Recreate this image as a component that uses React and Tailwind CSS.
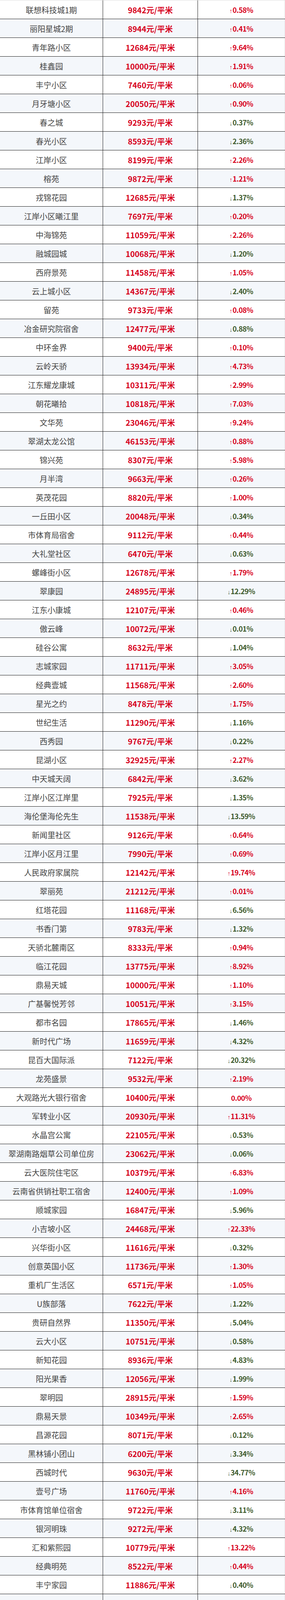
const ROWS = [
  ["联想科技城1期", 9842, "↑0.58%"],
  ["丽阳星城2期", 8944, "↑0.41%"],
  ["青年路小区", 12684, "↑9.64%"],
  ["桂鑫园", 10000, "↑1.91%"],
  ["丰宁小区", 7460, "↑0.06%"],
  ["月牙塘小区", 20050, "↑0.90%"],
  ["春之城", 9293, "↓0.37%"],
  ["春光小区", 8593, "↓2.36%"],
  ["江岸小区", 8199, "↑2.26%"],
  ["榕苑", 9872, "↑1.21%"],
  ["戎锦花园", 12685, "↓1.37%"],
  ["江岸小区曦江里", 7697, "↑0.20%"],
  ["中海锦苑", 11059, "↑2.26%"],
  ["融城园城", 10068, "↓1.20%"],
  ["西府景苑", 11458, "↑1.05%"],
  ["云上城小区", 14367, "↓2.40%"],
  ["留苑", 9733, "↑0.08%"],
  ["冶金研究院宿舍", 12477, "↓0.88%"],
  ["中环金界", 9400, "↑0.10%"],
  ["云岭天骄", 13934, "↑4.73%"],
  ["江东耀龙康城", 10311, "↑2.99%"],
  ["朝花曦拾", 10818, "↑7.03%"],
  ["文华苑", 23046, "↑9.24%"],
  ["翠湖太龙公馆", 46153, "↑0.88%"],
  ["锦兴苑", 8307, "↑5.98%"],
  ["月半湾", 9663, "↑0.26%"],
  ["英茂花园", 8820, "↑1.00%"],
  ["一丘田小区", 20048, "↓0.34%"],
  ["市体育局宿舍", 9112, "↑0.44%"],
  ["大礼堂社区", 6470, "↓0.63%"],
  ["螺峰街小区", 12678, "↑1.79%"],
  ["翠康园", 24895, "↓12.29%"],
  ["江东小康城", 12107, "↑0.46%"],
  ["傲云峰", 10072, "↓0.01%"],
  ["硅谷公寓", 8632, "↓1.04%"],
  ["志城家园", 11711, "↑3.05%"],
  ["经典壹城", 11568, "↑2.60%"],
  ["星光之约", 8478, "↑1.75%"],
  ["世纪生活", 11290, "↓1.16%"],
  ["西秀园", 9767, "↓0.22%"],
  ["昆湖小区", 32925, "↑2.27%"],
  ["中天城天阔", 6842, "↓3.62%"],
  ["江岸小区江岸里", 7925, "↓1.35%"],
  ["海伦堡海伦先生", 11538, "↓13.59%"],
  ["新闻里社区", 9126, "↑0.64%"],
  ["江岸小区月江里", 7990, "↑0.69%"],
  ["人民政府家属院", 12142, "↑19.74%"],
  ["翠丽苑", 21212, "↑0.01%"],
  ["红塔花园", 11168, "↓6.56%"],
  ["书香门第", 9783, "↓1.32%"],
  ["天骄北麓南区", 8333, "↑0.94%"],
  ["临江花园", 13775, "↑8.92%"],
  ["鼎易天城", 10000, "↑1.10%"],
  ["广基馨悦芳邻", 10051, "↑3.15%"],
  ["都市名园", 17865, "↓1.46%"],
  ["新时代广场", 11659, "↓4.32%"],
  ["昆百大国际派", 7122, "↓20.32%"],
  ["龙苑盛景", 9532, "↑2.19%"],
  ["大观路光大银行宿舍", 10400, "0.00%"],
  ["军转业小区", 20930, "↑11.31%"],
  ["水晶宫公寓", 22105, "↓0.53%"],
  ["翠湖南路烟草公司单位房", 23062, "↓0.06%"],
  ["云大医院住宅区", 10379, "↑6.83%"],
  ["云南省供销社职工宿舍", 12400, "↑1.09%"],
  ["顺城家园", 16847, "↓5.96%"],
  ["小吉坡小区", 24468, "↑22.33%"],
  ["兴华街小区", 11616, "↓0.32%"],
  ["创意英国小区", 11736, "↑1.30%"],
  ["重机厂生活区", 6571, "↑1.05%"],
  ["U族部落", 7622, "↓1.22%"],
  ["贵研自然界", 11350, "↓5.04%"],
  ["云大小区", 10751, "↓0.58%"],
  ["新知花园", 8936, "↓4.83%"],
  ["阳光果香", 12056, "↓1.99%"],
  ["翠明园", 28915, "↑1.59%"],
  ["鼎易天景", 10349, "↑2.65%"],
  ["昌源花园", 8071, "↓0.12%"],
  ["黑林铺小团山", 6200, "↓3.34%"],
  ["西城时代", 9630, "↓34.77%"],
  ["壹号广场", 11760, "↑4.16%"],
  ["市体育馆单位宿舍", 9722, "↓3.11%"],
  ["银河明珠", 9272, "↓4.32%"],
  ["汇和紫熙园", 10779, "↑13.22%"],
  ["经典明苑", 8522, "↑0.44%"],
  ["丰宁家园", 11886, "↓0.40%"],
  ["师大附中职工宿舍", 16250, "↑0.78%"],
  ["文林街93号院", 14365, "↓4.62%"],
  ["五华区佳华里", 11477, "↓2.93%"],
  ["和城国际", 6493, "0.00%"],
  ["中天城", 11392, "↑4.26%"],
  ["银河中央", 9537, "↓14.49%"],
  ["云南省水利厅宿舍", 13388, "↑13.57%"],
  ["桂华园", 14450, "↓3.95%"],
  ["春晖小区一期", 8110, "↑1.94%"],
  ["云大西苑", 17454, "0.00%"],
  ["云南省建筑科学院宿舍", 7241, "↓11.44%"],
  ["虹山小区", 8423, "↑2.83%"],
  ["西坝路小区", 8766, "↓0.30%"],
  ["正义路小区", 11740, "↓3.01%"],
  ["昆明设计院家属院", 8648, "↓6.60%"],
];

// 涨跌幅：↑ 红色，↓ 绿色，0.00% 无箭头
function Change({ value }) {
  const down = value.startsWith("↓");
  const up = value.startsWith("↑");
  const num = up || down ? value.slice(1) : value;
  return (
    <span className={`text-[18px] leading-none font-bold tracking-[-0.5px] ${down ? "text-[#3d5a2c]" : "text-[#d7001c]"}`}>
      {(up || down) && (
        <span className="font-normal text-[15px] leading-none mr-[1px] font-['Liberation_Sans',sans-serif]">
          {up ? "↑" : "↓"}
        </span>
      )}
      {num}
    </span>
  );
}

export default function App() {
  return (
    <div className="w-[730px] bg-white border-t border-[#dcdcdc] font-['Noto_Sans_CJK_SC',sans-serif]">
      {ROWS.map(([name, price, change], i) => (
        <div
          key={i}
          className={`flex h-12 border-b border-[#1a1a1a] ${i % 2 === 1 ? "bg-[#f4f7fb]" : "bg-white"}`}
        >
          <div className="flex w-[264px] shrink-0 items-center justify-center border-r border-[#1a1a1a] pt-[2px] text-[20px] leading-none text-[#444] whitespace-nowrap">
            {name}
          </div>
          <div className="flex w-[243px] shrink-0 items-center justify-center border-r border-[#1a1a1a] pt-[2px] text-[20px] leading-none font-bold text-[#d7001c]">
            {price}元/平米
          </div>
          <div className="flex flex-1 items-center justify-center border-r border-[#e0e0e0] pt-[2px]">
            <Change value={change} />
          </div>
        </div>
      ))}
    </div>
  );
}
